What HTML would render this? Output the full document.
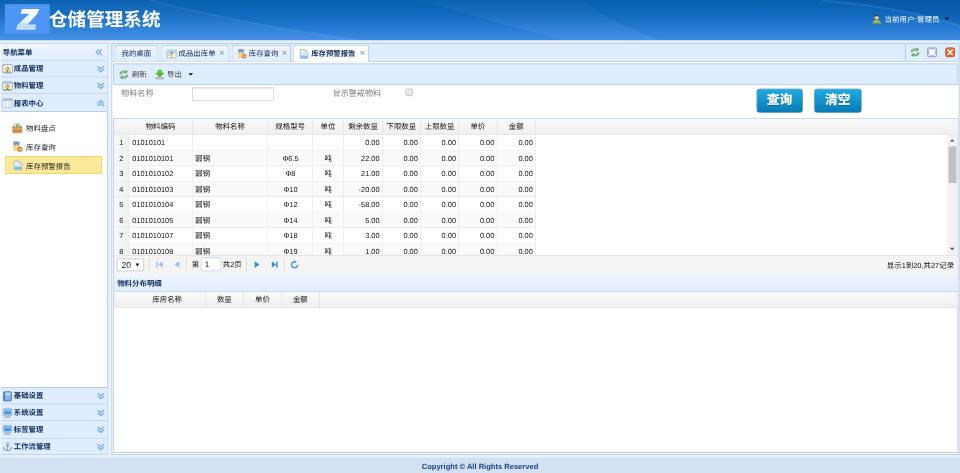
<!DOCTYPE html>
<html lang="zh-CN">
<head>
<meta charset="utf-8">
<title>仓储管理系统</title>
<style>
html,body{margin:0;padding:0;width:960px;height:473px;overflow:hidden;background:#E8F0FA;}
body{font-family:"Liberation Sans","Noto Sans CJK SC",sans-serif;font-size:12.4px;color:#000;text-rendering:geometricPrecision;}
#stage{position:absolute;left:0;top:0;width:1600px;height:789px;transform:scale(0.6);transform-origin:0 0;overflow:hidden;filter:contrast(1.0001);}
.abs{position:absolute;box-sizing:border-box;}
svg{display:block;overflow:visible;}
/* north */
#north{left:0;top:0;width:1600px;height:66.5px;background:linear-gradient(to bottom,#0860b0 0%,#1168bc 35%,#2278d0 65%,#3383dc 88%,#3c8ae3 100%);overflow:hidden;}
#logo{left:8.2px;top:6.8px;width:75px;height:49.6px;background:#4d96f3;}
#title{left:81.6px;top:8.6px;height:50px;line-height:50px;font-size:31px;font-weight:bold;color:#fff;white-space:nowrap;}
#user{left:1474px;top:21.6px;height:20px;line-height:20px;font-size:12.4px;letter-spacing:.25px;color:#fff;white-space:nowrap;}
/* west */
#west{left:-1px;top:71.7px;width:181px;height:686px;border:1px solid #95B8E7;background:#fff;}
.ah{left:1px;width:178px;height:28.4px;background:#E0ECFF;border-bottom:1px solid #95B8E7;}
.ah .t{position:absolute;left:22px;top:6px;height:17px;line-height:17px;font-size:12.3px;font-weight:bold;color:#0E2D5F;white-space:nowrap;}
.ah svg.ico{position:absolute;left:2.6px;top:5.8px;width:17.2px;height:17.2px;}
.ah svg.tool{position:absolute;left:154px;top:6px;width:16px;height:16px;}
.tn{left:9px;width:161px;height:29.4px;}.tn.sel{height:30.2px;}
.tn .tt{position:absolute;left:34.4px;top:8px;height:17px;line-height:17px;font-size:12.4px;color:#222;white-space:nowrap;}
.tn svg{position:absolute;left:11.4px;top:6.4px;width:17.6px;height:17.6px;}
.tn.sel{background:#fde99a;border:1px solid #e9c84e;}
.tn.sel .tt{left:33.4px;top:7.8px;}
.tn.sel svg{left:11.6px;top:6.4px;width:16px;height:17.6px;}
/* south */
#south{left:0;top:763.4px;width:1600px;height:26px;background:#D2E0F2;text-align:center;line-height:28.6px;font-size:12.6px;font-weight:bold;color:#15428B;}
/* center */
#tabshead{left:185.6px;top:71.7px;width:1413.7px;height:31px;background:#E0ECFF;border:1px solid #95B8E7;}
.tab{top:75.4px;height:27.2px;border:1px solid #9bbae4;border-bottom:0;border-radius:5px 5px 0 0;background:linear-gradient(to bottom,#EFF5FF 0,#E0ECFF 100%);color:#0E2D5F;font-size:12.3px;line-height:26.6px;white-space:nowrap;}
.tab.sel{background:#fff;font-weight:bold;height:27.8px;}
.tab .tx{position:absolute;top:0;}
.tab svg.ti{position:absolute;left:8.3px;top:5.8px;width:16px;height:16px;}
.tab .cl{position:absolute;top:-0.2px;font-size:16px;color:#6f8cb8;font-weight:normal;}
#tabpanel{left:185.6px;top:102.6px;width:1413.7px;height:655px;border:1px solid #95B8E7;border-top:0;background:#fff;}
#tbar{left:188.9px;top:105.8px;width:1408.6px;height:35px;background:#E0ECFF;border:1px solid #95B8E7;}
.bt{height:18px;line-height:18px;font-size:12.4px;color:#444;white-space:nowrap;}
.lb{font-size:13.6px;color:#7b7b7b;white-space:nowrap;height:20px;line-height:20px;}
.btn{height:39.5px;border-radius:5px;background:linear-gradient(to bottom,#1fa9e2 0%,#1293ce 50%,#0a7ab4 100%);border:1px solid #0e6f9f;color:#fff;font-size:21.4px;font-weight:bold;text-align:center;line-height:37px;text-shadow:0 1px 1px rgba(0,0,0,.3);-webkit-text-stroke:.35px #fff;}
/* grid */
.ghead{background:linear-gradient(to bottom,#F9F9F9 0,#efefef 100%);border-bottom:1px solid #ddd;}
.ghead .c{position:absolute;top:0;text-align:center;font-size:12.4px;color:#111;border-right:1px solid #dedede;box-sizing:border-box;white-space:nowrap;}
.grow .c{position:absolute;top:0;height:25.75px;line-height:26px;font-size:12.3px;color:#111;border-right:1px solid #e3e3e3;border-bottom:1px solid #e3e3e3;box-sizing:border-box;padding:0 4px 0 5px;white-space:nowrap;overflow:hidden;}
.grow .c.rn{background:linear-gradient(to right,#F9F9F9 0,#efefef 100%);text-align:center;padding:0;}
.grow.alt .c{background:#fafafa;}
.grow.alt .c.rn{background:linear-gradient(to right,#F9F9F9 0,#efefef 100%);}
.r{text-align:right;}.m{text-align:center;}
.px{font-size:12.4px;color:#111;white-space:nowrap;height:20px;line-height:20px;}
.sep{position:absolute;width:0;height:24px;border-left:1px solid #ccc;border-right:1px solid #fff;}
</style>
</head>
<body>
<div id="stage">
<div id="north" class="abs">
<svg class="abs" style="left:0;top:0" width="1600" height="67" viewBox="0 0 1600 67"><defs><linearGradient id="sw" x1="0" y1="0" x2="0" y2="1"><stop offset="0" stop-color="#7ab8ff" stop-opacity=".03"/><stop offset="1" stop-color="#7ab8ff" stop-opacity=".16"/></linearGradient></defs><path d="M0 0 H250 Q400 40 600 67 H0 Z" fill="url(#sw)"/><path d="M250 0 Q400 40 600 67" fill="none" stroke="#8cc4ff" stroke-opacity=".16" stroke-width="2"/><path d="M970 0 Q1020 40 1100 67 H940 Q800 30 697 0 Z" fill="url(#sw)"/><path d="M1370 0 Q1500 10 1600 42 V0 Z" fill="#003a8c" opacity=".2"/><path d="M1370 1 Q1500 11 1600 43" fill="none" stroke="#8cc4ff" stroke-opacity=".12" stroke-width="4"/></svg>
<div id="logo" class="abs"><svg width="75" height="50" viewBox="0 0 75 50"><path d="M28.8 8 H57.6 L54 15.8 L38.4 34 H52.2 L50.8 42 H19.2 L20.6 35 L41 15.8 H26.6 Z" fill="#fff"/><g stroke="#4d96f3" stroke-width="1.1"><line x1="12" y1="23.5" x2="62" y2="23.5" opacity=".18"/><line x1="12" y1="26.3" x2="62" y2="26.3" opacity=".3"/><line x1="12" y1="29.1" x2="62" y2="29.1" opacity=".42"/><line x1="12" y1="31.9" x2="62" y2="31.9" opacity=".55"/><line x1="12" y1="34.3" x2="62" y2="34.3" opacity=".7"/><line x1="12" y1="36.8" x2="62" y2="36.8" opacity=".9"/><line x1="12" y1="39.6" x2="62" y2="39.6" opacity=".9"/></g></svg></div>
<div id="title" class="abs">仓储管理系统</div>
<svg style="position:absolute;left:1452.8px;top:23.5px;width:16.4px;height:16.4px" viewBox="0 0 16 16"><defs><linearGradient id="ub" x1="0" y1="0" x2="0" y2="1"><stop offset="0" stop-color="#b4d67e"/><stop offset="1" stop-color="#6f9c34"/></linearGradient></defs><path d="M0.8 15.4 Q1 9.4 8 9 Q15 9.4 15.2 15.4 Z" fill="url(#ub)" stroke="#6a9438" stroke-width=".6"/><circle cx="8" cy="5" r="3.5" fill="#f3cfa6" stroke="#a8845c" stroke-width=".6"/><path d="M4.3 4.6 Q4.4 0.6 8 0.7 Q11.6 0.6 11.7 4.6 Q10 2.8 8 3.2 Q6 2.8 4.3 4.6 Z" fill="#3b3228"/></svg>
<div id="user" class="abs">当前用户:管理员</div>
<div class="abs" style="left:1574px;top:29.4px;width:0;height:0;border-left:4.4px solid transparent;border-right:4.4px solid transparent;border-top:5px solid #06183a"></div>
</div>
<div id="west" class="abs"></div>
<div class="abs ah" style="top:72.7px;height:28px;background:linear-gradient(to bottom,#EFF5FF 0,#E0ECFF 100%);"><span class="t" style="left:3.6px">导航菜单</span><svg class="tool" style="left:156.2px" viewBox="0 0 16 16"><path d="M8 3 L3.6 8 L8 13 M12.8 3 L8.4 8 L12.8 13" fill="none" stroke="#9cc8f4" stroke-width="2.6"/><path d="M8 3 L3.6 8 L8 13 M12.8 3 L8.4 8 L12.8 13" fill="none" stroke="#5fa2e8" stroke-width="1.3"/></svg></div>
<div class="abs ah" style="top:100.7px;"><svg class="ico" viewBox="0 0 16 16"><rect x="0.6" y="1.4" width="14.8" height="13.2" rx="1.4" fill="#f7f6ef" stroke="#939fb0" stroke-width="1.25"/><rect x="1.6" y="2.2" width="2" height="1.4" fill="#7fb46a"/><path d="M8 4.6 L3.4 9.4 H5 V12.6 H11 V9.4 H12.6 Z" fill="#f0dcae"/><path d="M8 4.2 L3 9.4 H5.4 L8 6.8 L10.6 9.4 H13 Z" fill="#cf9850"/><rect x="7.1" y="9.6" width="1.8" height="3" fill="#7a6a4a"/><rect x="2.6" y="12.6" width="10.8" height="1.2" fill="#5f9460"/></svg><span class="t">成品管理</span><svg class="tool" style="left:158.5px" viewBox="0 0 16 16"><path d="M2.8 3.4 L8 7.8 L13.2 3.4 M2.8 8.2 L8 12.6 L13.2 8.2" fill="none" stroke="#9cc8f4" stroke-width="2.6"/><path d="M2.8 3.4 L8 7.8 L13.2 3.4 M2.8 8.2 L8 12.6 L13.2 8.2" fill="none" stroke="#5fa2e8" stroke-width="1.3"/></svg></div>
<div class="abs ah" style="top:129.1px;"><svg class="ico" viewBox="0 0 16 16"><rect x="0.6" y="1.4" width="14.8" height="13.2" rx="1.4" fill="#f7f6ef" stroke="#8d9db6" stroke-width="1.25"/><rect x="1.2" y="2" width="13.6" height="2.6" fill="#a9c4e8"/><path d="M8 5 L3.4 9.6 H5 V12.6 H11 V9.6 H12.6 Z" fill="#f0dcae"/><path d="M8 4.6 L3 9.6 H5.4 L8 7.2 L10.6 9.6 H13 Z" fill="#cf9850"/><rect x="7.1" y="9.8" width="1.8" height="2.8" fill="#7a6a4a"/><rect x="2.6" y="12.6" width="10.8" height="1.2" fill="#5f9460"/></svg><span class="t">物料管理</span><svg class="tool" style="left:158.5px" viewBox="0 0 16 16"><path d="M2.8 3.4 L8 7.8 L13.2 3.4 M2.8 8.2 L8 12.6 L13.2 8.2" fill="none" stroke="#9cc8f4" stroke-width="2.6"/><path d="M2.8 3.4 L8 7.8 L13.2 3.4 M2.8 8.2 L8 12.6 L13.2 8.2" fill="none" stroke="#5fa2e8" stroke-width="1.3"/></svg></div>
<div class="abs ah" style="top:157.5px;"><svg class="ico" viewBox="0 0 16 16"><rect x="0.5" y="1.5" width="15" height="13" rx="1" fill="#ffffff" stroke="#8fa3bd"/><rect x="1" y="2" width="14" height="2.6" fill="#9dbbe4"/><rect x="1.2" y="5" width="4" height="9" fill="#e9edf3"/><rect x="6" y="5" width="4" height="9" fill="#f6f7fa"/><rect x="10.8" y="5" width="4" height="9" fill="#e9edf3"/><path d="M5.6 4.8 V14.4 M10.4 4.8 V14.4" stroke="#b9c3d0" stroke-width=".8"/></svg><span class="t">报表中心</span><svg class="tool" style="left:158.5px" viewBox="0 0 16 16"><path d="M2.8 7.8 L8 3.4 L13.2 7.8 M2.8 12.6 L8 8.2 L13.2 12.6" fill="none" stroke="#9cc8f4" stroke-width="2.6"/><path d="M2.8 7.8 L8 3.4 L13.2 7.8 M2.8 12.6 L8 8.2 L13.2 12.6" fill="none" stroke="#5fa2e8" stroke-width="1.3"/></svg></div>
<div class="abs tn" style="top:199px"><svg viewBox="0 0 16 16"><rect x="4.3" y="0.9" width="7.4" height="7" fill="#f3f7f3" stroke="#9fb0c6" stroke-width=".9"/><rect x="6" y="2" width="4" height="5" fill="#6fbd4e"/><path d="M1 5.6 L4 3.8 V7.2 H12 V3.8 L15 5.6 V13.4 Q15 14.9 13.6 14.9 H2.4 Q1 14.9 1 13.4 Z" fill="#d98a42" stroke="#b8763a" stroke-width=".7"/><path d="M1.6 7.6 H14.4 V10 H1.6 Z" fill="#e9a055"/><path d="M1.6 12.4 H14.4 V14.2 H1.6 Z" fill="#c98d55"/></svg><span class="tt">物料盘点</span></div>
<div class="abs tn" style="top:229.6px"><svg viewBox="0 0 16 16"><path d="M2.6 0.4 H11 V4.8 L6.8 7 L2.6 4.8 Z" fill="#5b8bcb" stroke="#4878b8" stroke-width=".6"/><path d="M4.6 0.8 V5.4 M9 0.8 V5.4" stroke="#8db4e4" stroke-width="1.3"/><path d="M6.8 3.4 L8.7 7.2 L12.8 7.7 L9.8 10.5 L10.6 14.6 L6.8 12.5 L3 14.6 L3.8 10.5 L0.8 7.7 L4.9 7.2 Z" fill="#f5dc80" stroke="#e6c052" stroke-width=".8"/><circle cx="12" cy="11.6" r="3.6" fill="#e8853f" stroke="#cf6a28" stroke-width=".7"/><rect x="10.2" y="11" width="3.6" height="1.4" fill="#fff4e8"/></svg><span class="tt">库存查询</span></div>
<div class="abs tn sel" style="top:259.9px"><svg viewBox="0 0 16 16"><path d="M1.6 0.8 H10.4 L14.4 4.8 V15.2 H1.6 Z" fill="#eef6ff" stroke="#7f9fbc" stroke-width="1.1"/><path d="M2.4 10.6 H13.6 V14.5 H2.4 Z" fill="#7fbaec"/><path d="M2.4 8.4 H13.6 V10.6 H2.4 Z" fill="#b9dbf6"/><path d="M2.4 5 H13.6 V8.4 H2.4 Z" fill="#dcecfb"/><path d="M10.2 1 V5 H14.2 Z" fill="#dfe6f4" stroke="#9fb4cc" stroke-width=".6"/></svg><span class="tt">库存预警报告</span></div>
<div class="abs ah" style="top:645px;border-top:1px solid #95B8E7;height:28.8px;"><svg class="ico" viewBox="0 0 16 16"><rect x="2" y="0.8" width="12" height="14.4" rx="1" fill="#5f93cf" stroke="#3f6ea8" stroke-width="1"/><rect x="3.4" y="2" width="9.4" height="12" fill="#86b3e4"/><rect x="3.4" y="2" width="9.4" height="5" fill="#a9cbee"/><rect x="2.2" y="1" width="1.6" height="14" fill="#3f6ea8"/><rect x="5" y="3.2" width="6" height="1.6" fill="#d9e8f8"/></svg><span class="t">基础设置</span><svg class="tool" style="left:158.5px" viewBox="0 0 16 16"><path d="M2.8 3.4 L8 7.8 L13.2 3.4 M2.8 8.2 L8 12.6 L13.2 8.2" fill="none" stroke="#9cc8f4" stroke-width="2.6"/><path d="M2.8 3.4 L8 7.8 L13.2 3.4 M2.8 8.2 L8 12.6 L13.2 8.2" fill="none" stroke="#5fa2e8" stroke-width="1.3"/></svg></div>
<div class="abs ah" style="top:673.8px;"><svg class="ico" viewBox="0 0 16 16"><rect x="1" y="1" width="14" height="10.6" rx="1.2" fill="#dfe6ee" stroke="#8e9cab" stroke-width=".9"/><rect x="2.4" y="2.4" width="11.2" height="7.6" fill="#3f97e6"/><rect x="2.4" y="2.4" width="11.2" height="3.4" fill="#75bbf4"/><rect x="6" y="11.8" width="4" height="1.6" fill="#b6bfc9"/><rect x="3.4" y="13.2" width="9.2" height="1.9" rx=".8" fill="#cdd4dc" stroke="#8e9cab" stroke-width=".7"/></svg><span class="t">系统设置</span><svg class="tool" style="left:158.5px" viewBox="0 0 16 16"><path d="M2.8 3.4 L8 7.8 L13.2 3.4 M2.8 8.2 L8 12.6 L13.2 8.2" fill="none" stroke="#9cc8f4" stroke-width="2.6"/><path d="M2.8 3.4 L8 7.8 L13.2 3.4 M2.8 8.2 L8 12.6 L13.2 8.2" fill="none" stroke="#5fa2e8" stroke-width="1.3"/></svg></div>
<div class="abs ah" style="top:702.2px;"><svg class="ico" viewBox="0 0 16 16"><rect x="1" y="1" width="14" height="10.6" rx="1.2" fill="#dfe6ee" stroke="#8e9cab" stroke-width=".9"/><rect x="2.4" y="2.4" width="11.2" height="7.6" fill="#3f97e6"/><rect x="2.4" y="2.4" width="11.2" height="3.4" fill="#75bbf4"/><rect x="6" y="11.8" width="4" height="1.6" fill="#b6bfc9"/><rect x="3.4" y="13.2" width="9.2" height="1.9" rx=".8" fill="#cdd4dc" stroke="#8e9cab" stroke-width=".7"/></svg><span class="t">标签管理</span><svg class="tool" style="left:158.5px" viewBox="0 0 16 16"><path d="M2.8 3.4 L8 7.8 L13.2 3.4 M2.8 8.2 L8 12.6 L13.2 8.2" fill="none" stroke="#9cc8f4" stroke-width="2.6"/><path d="M2.8 3.4 L8 7.8 L13.2 3.4 M2.8 8.2 L8 12.6 L13.2 8.2" fill="none" stroke="#5fa2e8" stroke-width="1.3"/></svg></div>
<div class="abs ah" style="top:730.6px;border-bottom:0;height:26.1px;"><svg class="ico" viewBox="0 0 16 16"><circle cx="8" cy="3" r="1.7" fill="none" stroke="#9a9a9a" stroke-width="1.4"/><path d="M8 4.6 V13.6 M5.2 6.6 H10.8" stroke="#9a9a9a" stroke-width="1.6" fill="none"/><path d="M2 9.2 Q2.6 13.8 8 14.2 Q13.4 13.8 14 9.2" fill="none" stroke="#9a9a9a" stroke-width="1.7"/><path d="M0.8 10.6 L2 8 L4 10.2 Z M15.2 10.6 L14 8 L12 10.2 Z" fill="#9a9a9a"/></svg><span class="t">工作流管理</span><svg class="tool" style="left:158.5px" viewBox="0 0 16 16"><path d="M2.8 3.4 L8 7.8 L13.2 3.4 M2.8 8.2 L8 12.6 L13.2 8.2" fill="none" stroke="#9cc8f4" stroke-width="2.6"/><path d="M2.8 3.4 L8 7.8 L13.2 3.4 M2.8 8.2 L8 12.6 L13.2 8.2" fill="none" stroke="#5fa2e8" stroke-width="1.3"/></svg></div>
<div id="tabshead" class="abs"></div>
<div id="tabpanel" class="abs"></div>
<div class="abs tab" style="left:191px;width:72.5px"><span class="tx" style="left:10.5px">我的桌面</span></div>
<div class="abs tab" style="left:268.5px;width:112.3px"><svg class="ti" viewBox="0 0 16 16"><rect x="0.6" y="1.6" width="14.8" height="12.8" rx="1" fill="#fdf6dc" stroke="#7f97ba" stroke-width="1.1"/><rect x="1.2" y="2.2" width="13.6" height="5.6" fill="#bcd7f3"/><rect x="1.2" y="7.8" width="13.6" height="1" fill="#f3e3a8"/><rect x="6.9" y="3.6" width="2.2" height="5.4" fill="#4f9f4c"/><rect x="2.2" y="9.4" width="3.6" height="1.4" fill="#8fc46a"/><rect x="6.4" y="9" width="3.2" height="4.4" fill="#f3b566"/><rect x="10.4" y="9.2" width="3.6" height="4" fill="#ffffff"/><rect x="2.2" y="11.2" width="3.6" height="2.2" fill="#ffffff"/></svg><span class="tx" style="left:28.2px">成品出库单</span><span class="cl" style="left:95.6px">×</span></div>
<div class="abs tab" style="left:385.7px;width:99.5px"><svg class="ti" viewBox="0 0 16 16"><path d="M2.6 0.4 H11 V4.8 L6.8 7 L2.6 4.8 Z" fill="#5b8bcb" stroke="#4878b8" stroke-width=".6"/><path d="M4.6 0.8 V5.4 M9 0.8 V5.4" stroke="#8db4e4" stroke-width="1.3"/><path d="M6.8 3.4 L8.7 7.2 L12.8 7.7 L9.8 10.5 L10.6 14.6 L6.8 12.5 L3 14.6 L3.8 10.5 L0.8 7.7 L4.9 7.2 Z" fill="#f5dc80" stroke="#e6c052" stroke-width=".8"/><circle cx="12" cy="11.6" r="3.6" fill="#e8853f" stroke="#cf6a28" stroke-width=".7"/><rect x="10.2" y="11" width="3.6" height="1.4" fill="#fff4e8"/></svg><span class="tx" style="left:28px">库存查询</span><span class="cl" style="left:83px">×</span></div>
<div class="abs tab sel" style="left:489.3px;width:126px"><svg class="ti" viewBox="0 0 16 16"><path d="M1.6 0.8 H10.4 L14.4 4.8 V15.2 H1.6 Z" fill="#eef6ff" stroke="#7f9fbc" stroke-width="1.1"/><path d="M2.4 10.6 H13.6 V14.5 H2.4 Z" fill="#7fbaec"/><path d="M2.4 8.4 H13.6 V10.6 H2.4 Z" fill="#b9dbf6"/><path d="M2.4 5 H13.6 V8.4 H2.4 Z" fill="#dcecfb"/><path d="M10.2 1 V5 H14.2 Z" fill="#dfe6f4" stroke="#9fb4cc" stroke-width=".6"/></svg><span class="tx" style="left:28.4px">库存预警报告</span><span class="cl" style="left:109px">×</span></div>
<div class="abs" style="left:1508.6px;top:72.7px;width:1px;height:29px;background:#95B8E7"></div>
<svg style="position:absolute;left:1516.5px;top:79.4px;width:16.4px;height:16.4px" viewBox="0 0 16 16"><path d="M2.4 8 A5.6 5 0 0 1 8 3.4 H10" stroke="#5fa75e" stroke-width="3.2" fill="none"/><path d="M9.4 0.2 L15 3.6 L9.4 7 Z" fill="#5fa75e"/><path d="M13.6 8 A5.6 5 0 0 1 8 12.6 H6" stroke="#5fa75e" stroke-width="3.2" fill="none"/><path d="M6.6 15.8 L1 12.4 L6.6 9 Z" fill="#5fa75e"/><path d="M2.6 7.6 A5.4 4.6 0 0 1 8 3.4 H11" stroke="#93cf8f" stroke-width="1.5" fill="none"/><path d="M13.4 8.4 A5.4 4.6 0 0 1 8 12.6 H5" stroke="#93cf8f" stroke-width="1.5" fill="none"/></svg>
<svg style="position:absolute;left:1545.4px;top:79.2px;width:17px;height:16.4px" viewBox="0 0 16 16"><rect x="0.7" y="0.7" width="14.6" height="14.6" rx="2.2" fill="#aebbe0" stroke="#7e92cf" stroke-width="1.2"/><circle cx="8" cy="8" r="4.8" fill="#ffffff"/><path d="M2.2 2.2 H5.6 L2.2 5.6 Z M13.8 2.2 H10.4 L13.8 5.6 Z M2.2 13.8 H5.6 L2.2 10.4 Z M13.8 13.8 H10.4 L13.8 10.4 Z" fill="#ffffff"/></svg>
<svg style="position:absolute;left:1574.6px;top:79.2px;width:17px;height:16.4px" viewBox="0 0 16 16"><rect x="0.7" y="0.7" width="14.6" height="14.6" rx="3" fill="#e0672a" stroke="#b9481a" stroke-width="1.2"/><rect x="1.6" y="1.6" width="12.8" height="6" rx="2.4" fill="#ea8350" opacity=".7"/><path d="M4.6 4.6 L11.4 11.4 M11.4 4.6 L4.6 11.4" stroke="#ffffff" stroke-width="2.3" stroke-linecap="round"/></svg>
<div id="tbar" class="abs"></div>
<svg style="position:absolute;left:198px;top:115.6px;width:16.6px;height:16.6px" viewBox="0 0 16 16"><path d="M2.4 8 A5.6 5 0 0 1 8 3.4 H10" stroke="#5fa75e" stroke-width="3.2" fill="none"/><path d="M9.4 0.2 L15 3.6 L9.4 7 Z" fill="#5fa75e"/><path d="M13.6 8 A5.6 5 0 0 1 8 12.6 H6" stroke="#5fa75e" stroke-width="3.2" fill="none"/><path d="M6.6 15.8 L1 12.4 L6.6 9 Z" fill="#5fa75e"/><path d="M2.6 7.6 A5.4 4.6 0 0 1 8 3.4 H11" stroke="#93cf8f" stroke-width="1.5" fill="none"/><path d="M13.4 8.4 A5.4 4.6 0 0 1 8 12.6 H5" stroke="#93cf8f" stroke-width="1.5" fill="none"/></svg>
<span class="abs bt" style="left:219.8px;top:115px">刷新</span>
<svg style="position:absolute;left:257.6px;top:115.6px;width:16.4px;height:16.4px" viewBox="0 0 16 16"><defs><linearGradient id="gx" x1="0" y1="0" x2="1" y2="1"><stop offset="0" stop-color="#86e54c"/><stop offset="1" stop-color="#2a9a10"/></linearGradient></defs><path d="M5 0.6 H11 V5.4 H15 L8 12.4 L1 5.4 H5 Z" fill="url(#gx)" stroke="#3aa818" stroke-width=".7"/><rect x="1" y="13" width="14" height="2.4" rx=".8" fill="#b4bac0" stroke="#969da5" stroke-width=".6"/></svg>
<span class="abs bt" style="left:278.4px;top:115px">导出</span>
<div class="abs" style="left:314px;top:122px;width:0;height:0;border-left:4.4px solid transparent;border-right:4.4px solid transparent;border-top:4.8px solid #111"></div>
<span class="abs lb" style="left:201.7px;top:146.4px">物料名称</span>
<div class="abs" style="left:320px;top:146px;width:136.4px;height:21.6px;border:1px solid #c6c6c6;border-top-color:#b0b0b0;background:#fff"></div>
<span class="abs lb" style="left:554.4px;top:146.4px;font-size:13.45px">显示警戒物料</span>
<div class="abs" style="left:675.6px;top:147.6px;width:12.6px;height:12.6px;border:1px solid #a6a6a6;border-radius:2.5px;background:linear-gradient(#f6f6f6,#dcdcdc)"></div>
<div class="abs btn" style="left:1260.5px;top:148px;width:77.5px">查询</div>
<div class="abs btn" style="left:1357px;top:148px;width:78.5px">清空</div>
<div class="abs" style="left:188.9px;top:196.8px;width:1407.7px;height:262px;border:1px solid #95B8E7;background:#fff"></div>
<div class="abs ghead" style="left:189.9px;top:197.8px;width:1405.7px;height:27.5px">
<div class="c" style="left:0.0px;width:25.6px;height:26.5px;line-height:26.0px;border-right-color:transparent;"></div>
<div class="c" style="left:25.6px;width:105.1px;height:26.5px;line-height:26.0px;">物料编码</div>
<div class="c" style="left:130.7px;width:126.9px;height:26.5px;line-height:26.0px;">物料名称</div>
<div class="c" style="left:257.6px;width:73.2px;height:26.5px;line-height:26.0px;">规格型号</div>
<div class="c" style="left:330.8px;width:52.8px;height:26.5px;line-height:26.0px;">单位</div>
<div class="c" style="left:383.6px;width:64.1px;height:26.5px;line-height:26.0px;">剩余数量</div>
<div class="c" style="left:447.7px;width:63.7px;height:26.5px;line-height:26.0px;">下限数量</div>
<div class="c" style="left:511.4px;width:63.7px;height:26.5px;line-height:26.0px;">上限数量</div>
<div class="c" style="left:575.1px;width:63.8px;height:26.5px;line-height:26.0px;">单价</div>
<div class="c" style="left:638.9px;width:64.2px;height:26.5px;line-height:26.0px;">金额</div>
</div>
<div class="abs" style="left:189.9px;top:225.3px;width:1405.7px;height:199.5px;overflow:hidden">
<div class="abs grow" style="left:0;top:0.00px;width:710px;height:25.75px">
<div class="c rn" style="left:0.0px;width:25.6px">1</div>
<div class="c " style="left:25.6px;width:105.1px">01010101</div>
<div class="c " style="left:130.7px;width:126.9px"></div>
<div class="c m" style="left:257.6px;width:73.2px"></div>
<div class="c m" style="left:330.8px;width:52.8px"></div>
<div class="c r" style="left:383.6px;width:64.1px">0.00</div>
<div class="c r" style="left:447.7px;width:63.7px">0.00</div>
<div class="c r" style="left:511.4px;width:63.7px">0.00</div>
<div class="c r" style="left:575.1px;width:63.8px">0.00</div>
<div class="c r" style="left:638.9px;width:64.2px">0.00</div>
</div>
<div class="abs grow alt" style="left:0;top:25.75px;width:710px;height:25.75px">
<div class="c rn" style="left:0.0px;width:25.6px">2</div>
<div class="c " style="left:25.6px;width:105.1px">0101010101</div>
<div class="c " style="left:130.7px;width:126.9px">圆钢</div>
<div class="c m" style="left:257.6px;width:73.2px">Φ6.5</div>
<div class="c m" style="left:330.8px;width:52.8px">吨</div>
<div class="c r" style="left:383.6px;width:64.1px">22.00</div>
<div class="c r" style="left:447.7px;width:63.7px">0.00</div>
<div class="c r" style="left:511.4px;width:63.7px">0.00</div>
<div class="c r" style="left:575.1px;width:63.8px">0.00</div>
<div class="c r" style="left:638.9px;width:64.2px">0.00</div>
</div>
<div class="abs grow" style="left:0;top:51.50px;width:710px;height:25.75px">
<div class="c rn" style="left:0.0px;width:25.6px">3</div>
<div class="c " style="left:25.6px;width:105.1px">0101010102</div>
<div class="c " style="left:130.7px;width:126.9px">圆钢</div>
<div class="c m" style="left:257.6px;width:73.2px">Φ8</div>
<div class="c m" style="left:330.8px;width:52.8px">吨</div>
<div class="c r" style="left:383.6px;width:64.1px">21.00</div>
<div class="c r" style="left:447.7px;width:63.7px">0.00</div>
<div class="c r" style="left:511.4px;width:63.7px">0.00</div>
<div class="c r" style="left:575.1px;width:63.8px">0.00</div>
<div class="c r" style="left:638.9px;width:64.2px">0.00</div>
</div>
<div class="abs grow alt" style="left:0;top:77.25px;width:710px;height:25.75px">
<div class="c rn" style="left:0.0px;width:25.6px">4</div>
<div class="c " style="left:25.6px;width:105.1px">0101010103</div>
<div class="c " style="left:130.7px;width:126.9px">圆钢</div>
<div class="c m" style="left:257.6px;width:73.2px">Φ10</div>
<div class="c m" style="left:330.8px;width:52.8px">吨</div>
<div class="c r" style="left:383.6px;width:64.1px">-20.00</div>
<div class="c r" style="left:447.7px;width:63.7px">0.00</div>
<div class="c r" style="left:511.4px;width:63.7px">0.00</div>
<div class="c r" style="left:575.1px;width:63.8px">0.00</div>
<div class="c r" style="left:638.9px;width:64.2px">0.00</div>
</div>
<div class="abs grow" style="left:0;top:103.00px;width:710px;height:25.75px">
<div class="c rn" style="left:0.0px;width:25.6px">5</div>
<div class="c " style="left:25.6px;width:105.1px">0101010104</div>
<div class="c " style="left:130.7px;width:126.9px">圆钢</div>
<div class="c m" style="left:257.6px;width:73.2px">Φ12</div>
<div class="c m" style="left:330.8px;width:52.8px">吨</div>
<div class="c r" style="left:383.6px;width:64.1px">-58.00</div>
<div class="c r" style="left:447.7px;width:63.7px">0.00</div>
<div class="c r" style="left:511.4px;width:63.7px">0.00</div>
<div class="c r" style="left:575.1px;width:63.8px">0.00</div>
<div class="c r" style="left:638.9px;width:64.2px">0.00</div>
</div>
<div class="abs grow alt" style="left:0;top:128.75px;width:710px;height:25.75px">
<div class="c rn" style="left:0.0px;width:25.6px">6</div>
<div class="c " style="left:25.6px;width:105.1px">0101010105</div>
<div class="c " style="left:130.7px;width:126.9px">圆钢</div>
<div class="c m" style="left:257.6px;width:73.2px">Φ14</div>
<div class="c m" style="left:330.8px;width:52.8px">吨</div>
<div class="c r" style="left:383.6px;width:64.1px">5.00</div>
<div class="c r" style="left:447.7px;width:63.7px">0.00</div>
<div class="c r" style="left:511.4px;width:63.7px">0.00</div>
<div class="c r" style="left:575.1px;width:63.8px">0.00</div>
<div class="c r" style="left:638.9px;width:64.2px">0.00</div>
</div>
<div class="abs grow" style="left:0;top:154.50px;width:710px;height:25.75px">
<div class="c rn" style="left:0.0px;width:25.6px">7</div>
<div class="c " style="left:25.6px;width:105.1px">0101010107</div>
<div class="c " style="left:130.7px;width:126.9px">圆钢</div>
<div class="c m" style="left:257.6px;width:73.2px">Φ18</div>
<div class="c m" style="left:330.8px;width:52.8px">吨</div>
<div class="c r" style="left:383.6px;width:64.1px">3.00</div>
<div class="c r" style="left:447.7px;width:63.7px">0.00</div>
<div class="c r" style="left:511.4px;width:63.7px">0.00</div>
<div class="c r" style="left:575.1px;width:63.8px">0.00</div>
<div class="c r" style="left:638.9px;width:64.2px">0.00</div>
</div>
<div class="abs grow alt" style="left:0;top:180.25px;width:710px;height:25.75px">
<div class="c rn" style="left:0.0px;width:25.6px">8</div>
<div class="c " style="left:25.6px;width:105.1px">0101010108</div>
<div class="c " style="left:130.7px;width:126.9px">圆钢</div>
<div class="c m" style="left:257.6px;width:73.2px">Φ19</div>
<div class="c m" style="left:330.8px;width:52.8px">吨</div>
<div class="c r" style="left:383.6px;width:64.1px">1.00</div>
<div class="c r" style="left:447.7px;width:63.7px">0.00</div>
<div class="c r" style="left:511.4px;width:63.7px">0.00</div>
<div class="c r" style="left:575.1px;width:63.8px">0.00</div>
<div class="c r" style="left:638.9px;width:64.2px">0.00</div>
</div>
<div class="abs" style="left:1388.7px;top:0;width:17px;height:199.5px;background:#f1f1f1">
<div class="abs" style="left:2px;top:18.4px;width:13px;height:61.4px;background:#c1c1c1"></div>
<div class="abs" style="left:4.5px;top:7.2px;width:0;height:0;border-left:4px solid transparent;border-right:4px solid transparent;border-bottom:4.6px solid #555"></div>
<div class="abs" style="left:4.5px;top:187.5px;width:0;height:0;border-left:4px solid transparent;border-right:4px solid transparent;border-top:4.6px solid #555"></div>
</div></div>
<div class="abs" style="left:189.9px;top:424.8px;width:1405.7px;height:33.2px;background:#F4F4F4;border-top:1px solid #ddd"></div>
<div class="abs" style="left:195.2px;top:430.5px;width:44.7px;height:21.4px;border:1px solid #b4b4b4;border-radius:2px;background:#fff"></div>
<span class="abs px" style="left:202.6px;top:432px;font-size:14.2px">20</span>
<div class="abs" style="left:226.2px;top:438.8px;width:0;height:0;border-left:3.5px solid transparent;border-right:3.5px solid transparent;border-top:5.4px solid #000"></div>
<div class="sep" style="left:247.6px;top:429px"></div>
<div class="sep" style="left:310.2px;top:429px"></div>
<div class="sep" style="left:410.4px;top:429px"></div>
<div class="sep" style="left:473.9px;top:429px"></div>
<svg class="abs" style="left:258px;top:433px" width="16" height="16" viewBox="0 0 16 16"><rect x="2.6" y="3" width="2.2" height="10" fill="#8fc0ec"/><path d="M13 3 V13 L6 8 Z" fill="#8fc0ec"/></svg>
<svg class="abs" style="left:287px;top:433px" width="16" height="16" viewBox="0 0 16 16"><path d="M12 2.6 V13.4 L4.2 8 Z" fill="#8fc0ec"/></svg>
<span class="abs px" style="left:319.6px;top:431px">第</span>
<div class="abs" style="left:334.8px;top:428.8px;width:34.2px;height:23px;border:1px solid #a9c6ec;border-radius:4px;background:#fff"></div>
<span class="abs px" style="left:341.4px;top:431px;font-size:13.4px">1</span>
<span class="abs px" style="left:371.2px;top:431px">共2页</span>
<svg class="abs" style="left:420px;top:433px" width="16" height="16" viewBox="0 0 16 16"><path d="M4.4 2.4 V13.6 L12.6 8 Z" fill="#2d8fd8"/></svg>
<svg class="abs" style="left:450px;top:433px" width="16" height="16" viewBox="0 0 16 16"><path d="M3 2.8 V13.2 L10.2 8 Z" fill="#2d8fd8"/><rect x="10.4" y="2.8" width="2.3" height="10.4" fill="#2d8fd8"/></svg>
<svg class="abs" style="left:483px;top:432.5px" width="16" height="16" viewBox="0 0 16 16"><path d="M8 3.4 A5 5 0 1 0 13 8.4" fill="none" stroke="#2d8fd8" stroke-width="2"/><path d="M7.4 0.6 L11.4 3.4 L7.4 6.2 Z" fill="#2d8fd8"/></svg>
<span class="abs px" style="right:9.8px;top:432.6px">显示1到20,共27记录</span>
<div class="abs" style="left:188.9px;top:458px;width:1407.7px;height:296.9px;border:1px solid #9fb4cf;border-top:0;background:#fff"></div>
<div class="abs" style="left:189.9px;top:458px;width:1405.7px;height:29.4px;background:linear-gradient(to bottom,#EFF5FF 0,#E0ECFF 100%);border-bottom:1px solid #95B8E7"><span style="position:absolute;left:5.4px;top:5.6px;height:17px;line-height:17px;font-size:12.4px;font-weight:bold;color:#0E2D5F;white-space:nowrap">物料分布明细</span></div>
<div class="abs ghead" style="left:189.9px;top:487.4px;width:1405.7px;height:26px">
<div class="c" style="left:0.0px;width:25.6px;height:25px;line-height:26px;border-right-color:transparent;"></div>
<div class="c" style="left:25.6px;width:127.2px;height:25px;line-height:26px;">库房名称</div>
<div class="c" style="left:152.8px;width:63.5px;height:25px;line-height:26px;">数量</div>
<div class="c" style="left:216.3px;width:63.4px;height:25px;line-height:26px;">单价</div>
<div class="c" style="left:279.7px;width:63.0px;height:25px;line-height:26px;">金额</div>
</div>
<div id="south" class="abs">Copyright © All Rights Reserved</div>
</div>
</body>
</html>
